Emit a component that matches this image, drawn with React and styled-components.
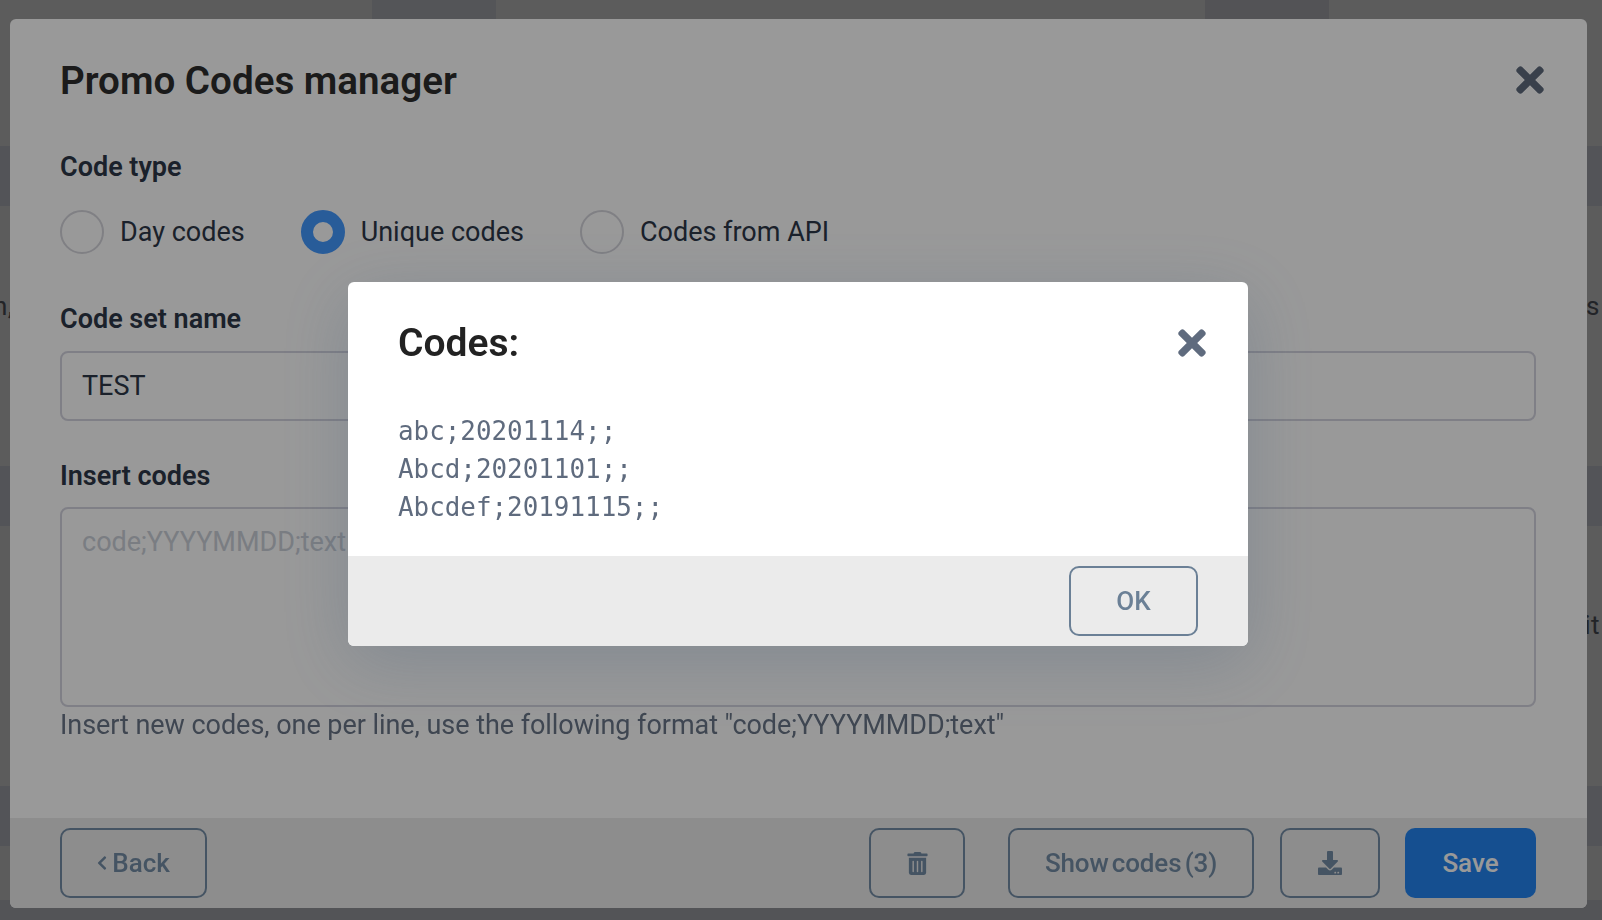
import React from "react"
import styled, {createGlobalStyle} from "styled-components"
import {FaTimes, FaTrashAlt, FaDownload, FaChevronLeft} from "react-icons/fa"

const GlobalStyle = createGlobalStyle`
	html, body {
		margin: 0;
		height: 100%;
		background: #fff;
		overflow: hidden;
	}
	* {
		box-sizing: border-box;
	}
`

const font = `Roboto, "Liberation Sans", sans-serif`
const mono = `"DejaVu Sans Mono", "Liberation Mono", monospace`

const App = () => {
	return (
		<>
			<GlobalStyle/>
			<Page>
				<TopRow>
					<div/>
					<TopCell/>
					<div/>
					<TopCell $dark/>
					<div/>
				</TopRow>
				<Band/>
				<TextRow $pt="86px">
					<Snippet $left>n,</Snippet>
					<Snippet>ns</Snippet>
				</TextRow>
				<Band/>
				<TextRow $pt="85px">
					<span/>
					<Snippet>it</Snippet>
				</TextRow>
				<Band/>
				<Spacer/>
				<BottomBand/>
			</Page>

			<Overlay>
				<Panel>
					<Body>
						<PanelHead>
							<Title>Promo Codes manager</Title>
							<CloseBtn><FaTimes/></CloseBtn>
						</PanelHead>

						<Label>Code type</Label>
						<Radios>
							<RadioItem>
								<Radio/>
								Day codes
							</RadioItem>
							<RadioItem>
								<Radio $on/>
								Unique codes
							</RadioItem>
							<RadioItem>
								<Radio/>
								Codes from API
							</RadioItem>
						</Radios>

						<Label $mt="49px">Code set name</Label>
						<Input defaultValue="TEST"/>

						<Label $mt="39px">Insert codes</Label>
						<Area placeholder="code;YYYYMMDD;text"/>
						<Help>Insert new codes, one per line, use the following format "code;YYYYMMDD;text"</Help>
					</Body>
					<PanelFoot>
						<Btn $w="147px"><BackIcon/>Back</Btn>
						<RightBtns>
							<Btn $w="96px"><FaTrashAlt size={23}/></Btn>
							<ShowBtn $w="246px" $ml="43px">Show codes (3)</ShowBtn>
							<Btn $w="100px" $ml="26px"><FaDownload size={24}/></Btn>
							<SaveBtn>Save</SaveBtn>
						</RightBtns>
					</PanelFoot>
				</Panel>
			</Overlay>

			<Overlay $center>
				<Modal>
					<ModalBody>
						<ModalHead>
							<ModalTitle>Codes:</ModalTitle>
							<ModalClose><FaTimes/></ModalClose>
						</ModalHead>
						<Codes>
							<div>abc;20201114;;</div>
							<div>Abcd;20201101;;</div>
							<div>Abcdef;20191115;;</div>
						</Codes>
					</ModalBody>
					<ModalFoot>
						<OkBtn>OK</OkBtn>
					</ModalFoot>
				</Modal>
			</Overlay>
		</>
	)
}

export default App

const Page = styled.div`
	height: 920px;
	overflow: hidden;
	background: #fff;
	font-family: ${font};
`
const TopRow = styled.div`
	height: 146px;
	display: grid;
	grid-template-columns: 372px 124px 709px 124px 1fr;
`
const TopCell = styled.div`
	background: ${p => p.$dark ? "#e6e8f0" : "#eaedf5"};
`
const Band = styled.div`
	height: 60px;
	background: #e8ecf5;
`
const TextRow = styled.div`
	height: 260px;
	padding-top: ${p => p.$pt};
	display: flex;
	justify-content: space-between;
	font-size: 26px;
	line-height: 28px;
	letter-spacing: .5px;
	color: #5f6772;
`
const Snippet = styled.span`
	margin-left: ${p => p.$left ? "-7px" : "0"};
	margin-right: ${p => p.$left ? "0" : "2px"};
`
const Spacer = styled.div`
	height: 54px;
`
const BottomBand = styled.div`
	height: 20px;
	background: #e8ecf3;
`
const Overlay = styled.div`
	position: fixed;
	inset: 0;
	background: rgba(0, 0, 0, .4);
	display: flex;
	padding: ${p => p.$center ? "8px 6px 0 0" : "19px 15px 12px 10px"};
	align-items: ${p => p.$center ? "center" : "stretch"};
	justify-content: center;
	font-family: ${font};
`
const Panel = styled.div`
	flex: 1;
	display: flex;
	flex-direction: column;
	background: #fff;
	border-radius: 6px;
	overflow: hidden;
`
const Body = styled.div`
	flex: 1;
	padding: 0 51px 0 50px;
`
const PanelHead = styled.div`
	display: flex;
	justify-content: space-between;
	align-items: center;
	height: 132px;
	padding-bottom: 10px;
`
const Title = styled.h2`
	margin: 0;
	font-size: 38.6px;
	font-weight: 600;
	color: #2d2d2d;
`
const CloseBtn = styled.div`
	display: flex;
	font-size: 40px;
	color: #5f6b7e;
	margin-right: -14px;
`
const Label = styled.div`
	margin-top: ${p => p.$mt || "0"};
	font-size: 27px;
	line-height: 32px;
	font-weight: 600;
	color: #2d3748;
`
const Radios = styled.div`
	display: flex;
	gap: 56px;
	margin-top: 27px;
`
const RadioItem = styled.label`
	display: flex;
	align-items: center;
	gap: 16px;
	font-size: 27px;
	color: #2d3748;
`
const Radio = styled.span`
	width: 44px;
	height: 44px;
	border-radius: 50%;
	background: ${p => p.$on ? "#fff" : "transparent"};
	border: ${p => p.$on ? "12px solid #4499ff" : "2px solid #d5d5dc"};
`
const Input = styled.input`
	display: block;
	width: 100%;
	height: 70px;
	margin-top: 16px;
	padding: 0 20px;
	border: 2px solid #d4d4df;
	border-radius: 8px;
	outline: none;
	font-family: ${font};
	font-size: 27px;
	color: #2d3748;
`
const Area = styled.textarea`
	display: block;
	width: 100%;
	height: 200px;
	margin-top: 15px;
	padding: 17px 20px;
	border: 2px solid #d4d4df;
	border-radius: 8px;
	outline: none;
	resize: none;
	font-family: ${font};
	font-size: 27px;
	&::placeholder {
		color: #cbd0d9;
		opacity: 1;
	}
`
const Help = styled.div`
	margin-top: 1px;
	font-size: 27px;
	line-height: 34px;
	letter-spacing: -.05px;
	color: #6a7688;
`
const PanelFoot = styled.div`
	height: 90px;
	padding: 10px 51px 10px 50px;
	display: flex;
	justify-content: space-between;
	background: #ebebeb;
`
const RightBtns = styled.div`
	display: flex;
`
const Btn = styled.button`
	width: ${p => p.$w};
	margin-left: ${p => p.$ml || "0"};
	display: flex;
	align-items: center;
	justify-content: center;
	background: transparent;
	border: 2px solid #748da6;
	border-radius: 10px;
	font-family: ${font};
	font-size: 26px;
	font-weight: 500;
	color: #748da6;
`
const ShowBtn = styled(Btn)`
	word-spacing: -3px;
	letter-spacing: -.15px;
`
const BackIcon = styled(FaChevronLeft)`
	width: 10px;
	height: 18px;
	margin-right: 5px;
`
const SaveBtn = styled.button`
	width: 131px;
	margin-left: 25px;
	background: #2384f0;
	border: 0;
	border-radius: 10px;
	font-family: ${font};
	font-size: 26px;
	font-weight: 500;
	color: #fff;
`
const Modal = styled.div`
	width: 900px;
	height: 364px;
	display: flex;
	flex-direction: column;
	background: #fff;
	border-radius: 6px;
	overflow: hidden;
	box-shadow: 0 16px 70px rgba(60, 90, 120, .26);
`
const ModalBody = styled.div`
	flex: 1;
	padding: 0 50px;
`
const ModalHead = styled.div`
	display: flex;
	justify-content: space-between;
	align-items: center;
	height: 122px;
`
const ModalTitle = styled.h3`
	margin: 0;
	font-size: 39px;
	font-weight: 600;
	color: #222;
`
const ModalClose = styled.div`
	display: flex;
	font-size: 40px;
	color: #5f6b7e;
	margin-right: -14px;
`
const Codes = styled.div`
	margin-top: 8px;
	font-family: ${mono};
	font-size: 25.9px;
	line-height: 38px;
	color: #5f6b7e;
`
const ModalFoot = styled.div`
	height: 90px;
	padding: 10px 50px 10px;
	display: flex;
	justify-content: flex-end;
	background: #ebebeb;
`
const OkBtn = styled.button`
	width: 129px;
	background: transparent;
	border: 2px solid #6b8096;
	border-radius: 10px;
	font-family: ${font};
	font-size: 26px;
	font-weight: 500;
	color: #6b8096;
`
